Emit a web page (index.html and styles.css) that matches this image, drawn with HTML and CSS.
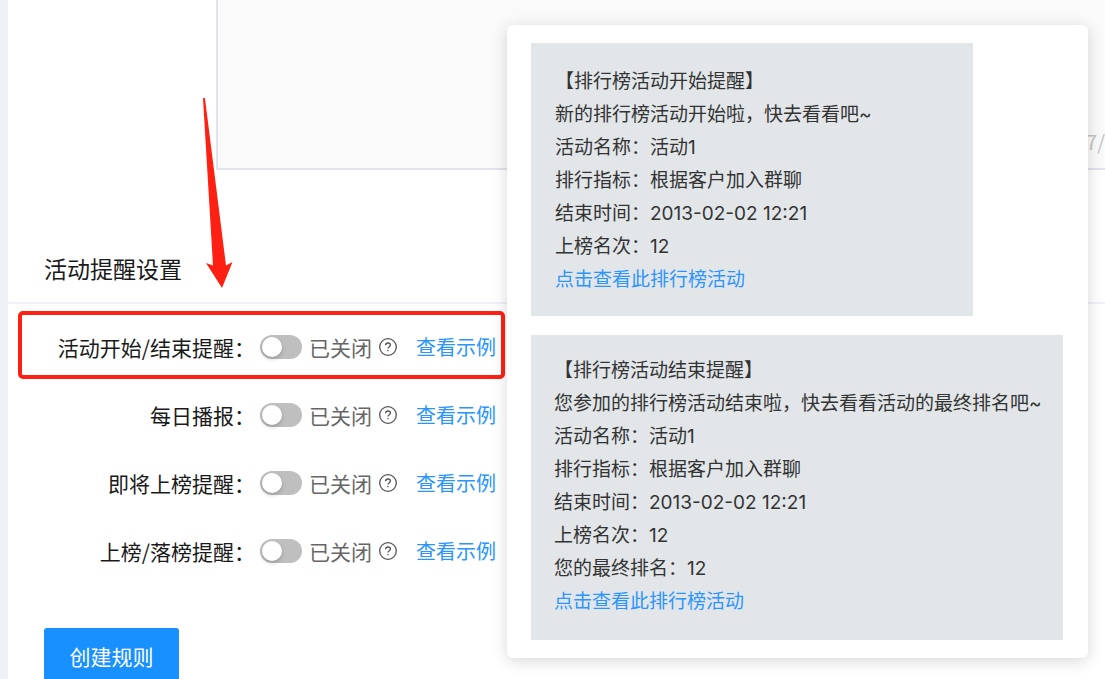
FILE: index.html
```html
<!DOCTYPE html>
<html lang="zh-CN">
<head>
    <meta charset="UTF-8">
    <meta name="viewport" content="width=device-width, initial-scale=1.0">
    <title>活动提醒设置</title>
    <link rel="stylesheet" href="styles.css">
</head>
<body>
    <div class="panel">
        <div class="editor">
            <textarea aria-label="活动内容" disabled></textarea>
            <span class="count">7/</span>
        </div>
        <h2 class="title">活动提醒设置</h2>
        <form class="form">
            <div class="item">
                <label for="remind">活动开始/结束提醒：</label>
                <input type="checkbox" class="switch" id="remind">
                <span class="status">已关闭</span>
                <svg class="help" viewBox="0 0 18 18"><circle cx="9" cy="9" r="8.3"/><path d="M6.6 7.3C6.6 5.8 7.6 5 9 5s2.4.9 2.4 2.1c0 1.700-2.400 1.700-2.400 3.500"/><path d="M9 12v1.300"/></svg>
                <a href="#">查看示例</a>
            </div>
            <div class="item">
                <label for="daily">每日播报：</label>
                <input type="checkbox" class="switch" id="daily">
                <span class="status">已关闭</span>
                <svg class="help" viewBox="0 0 18 18"><circle cx="9" cy="9" r="8.3"/><path d="M6.6 7.3C6.6 5.8 7.6 5 9 5s2.4.9 2.4 2.1c0 1.700-2.400 1.700-2.400 3.500"/><path d="M9 12v1.300"/></svg>
                <a href="#">查看示例</a>
            </div>
            <div class="item">
                <label for="soon">即将上榜提醒：</label>
                <input type="checkbox" class="switch" id="soon">
                <span class="status">已关闭</span>
                <svg class="help" viewBox="0 0 18 18"><circle cx="9" cy="9" r="8.3"/><path d="M6.6 7.3C6.6 5.8 7.6 5 9 5s2.4.9 2.4 2.1c0 1.700-2.400 1.700-2.400 3.500"/><path d="M9 12v1.300"/></svg>
                <a href="#">查看示例</a>
            </div>
            <div class="item">
                <label for="rank">上榜/落榜提醒：</label>
                <input type="checkbox" class="switch" id="rank">
                <span class="status">已关闭</span>
                <svg class="help" viewBox="0 0 18 18"><circle cx="9" cy="9" r="8.3"/><path d="M6.6 7.3C6.6 5.8 7.6 5 9 5s2.4.9 2.4 2.1c0 1.700-2.400 1.700-2.400 3.500"/><path d="M9 12v1.300"/></svg>
                <a href="#">查看示例</a>
            </div>
            <button type="button" class="submit">创建规则</button>
        </form>
    </div>

    <!-- 标注 -->
    <div class="mark"></div>
    <svg class="arrow" viewBox="0 0 30 192"><path d="M1 1.500Q2 0 3 1.500L24 168.500L30.500 165L20 191L4 166L11 168.500Z"/></svg>

    <!-- 示例弹层 -->
    <div class="popover">
        <div class="card start">
            <p>【排行榜活动开始提醒】</p>
            <p>新的排行榜活动开始啦，快去看看吧~</p>
            <p>活动名称：活动1</p>
            <p>排行指标：根据客户加入群聊</p>
            <p>结束时间：2013-02-02 12:21</p>
            <p>上榜名次：12</p>
            <p><a href="#">点击查看此排行榜活动</a></p>
        </div>
        <div class="card end">
            <p>【排行榜活动结束提醒】</p>
            <p>您参加的排行榜活动结束啦，快去看看活动的最终排名吧~</p>
            <p>活动名称：活动1</p>
            <p>排行指标：根据客户加入群聊</p>
            <p>结束时间：2013-02-02 12:21</p>
            <p>上榜名次：12</p>
            <p>您的最终排名：12</p>
            <p><a href="#">点击查看此排行榜活动</a></p>
        </div>
    </div>
</body>
</html>
```
FILE: styles.css
```css
*{
    margin: 0;
    padding: 0;
    box-sizing: border-box;
}
body{
    position: relative;
    height: 100vh;
    overflow: hidden;
    padding-left: 8px;
    background-color: #f0f1f6;
    font-family: "Noto Sans CJK SC", sans-serif;
    color: #1a1a1a;
}
a{
    color: #2b95ff;
    text-decoration: none;
}
.panel{
    min-height: 100vh;
    background-color: #fff;
}
.editor{
    position: relative;
    margin-left: 208px;
}
.editor textarea{
    display: block;
    width: 100%;
    height: 170px;
    border: solid #e2e2ea;
    border-width: 0 0 2px 2px;
    background-color: #fafafa;
    resize: none;
}
.count{
    position: absolute;
    right: 0;
    bottom: 16px;
    line-height: 24px;
    font-size: 20px;
    color: #c4c4c4;
}
.title{
    padding: 82px 36px 17px;
    border-bottom: 2px solid #f0f0f6;
    line-height: 33px;
    font-size: 23px;
    font-weight: normal;
}
.form{
    padding-top: 9px;
}
.item{
    display: flex;
    align-items: center;
    height: 68px;
    line-height: 30px;
    font-size: 21px;
}
.item label{
    width: 247px;
    text-align: right;
}
.switch{
    appearance: none;
    width: 42px;
    height: 24px;
    margin-left: 5px;
    border-radius: 12px;
    background-color: #bfbfbf;
}
.switch::before{
    content: "";
    display: block;
    width: 20px;
    height: 20px;
    margin: 2px;
    border-radius: 50%;
    background-color: #fff;
    box-shadow: 0 2px 4px rgba(0,0,0,0.2);
}
.switch:checked{
    background-color: #1890ff;
}
.switch:checked::before{
    margin-left: 20px;
}
.status{
    margin-left: 7px;
    color: #666;
}
.help{
    width: 18px;
    height: 18px;
    margin-left: 7px;
    fill: none;
    stroke: #555;
    stroke-width: 1.3;
}
.item a{
    margin-left: 19px;
    font-size: 20px;
}
.submit{
    width: 135px;
    height: 55px;
    margin: 43px 0 0 36px;
    border: 0;
    border-radius: 3px;
    background-color: #1890ff;
    color: #fff;
    font-family: inherit;
    font-size: 21px;
}
.mark{
    position: absolute;
    left: 18px;
    top: 311px;
    width: 487px;
    height: 68px;
    border: 4px solid #ff2014;
    border-radius: 5px;
    pointer-events: none;
}
.arrow{
    position: absolute;
    left: 202px;
    top: 97px;
    width: 30px;
    height: 192px;
    overflow: visible;
    fill: #ff2014;
}
.popover{
    position: absolute;
    left: 507px;
    top: 25px;
    display: flex;
    flex-direction: column;
    align-items: flex-start;
    gap: 19px;
    padding: 18px 25px 18px 24px;
    border-radius: 6px;
    background-color: #fff;
    box-shadow: 0 3px 16px rgba(0,0,0,0.16);
}
.card{
    background-color: #e2e6e9;
    line-height: 33px;
    font-family: Inter, "Noto Sans CJK SC", sans-serif;
    font-size: 19px;
    color: #333;
}
.start{
    width: 442px;
    padding: 22px 24px 20px;
}
.end{
    width: 532px;
    padding: 19px 12px 22px 23px;
}
```
